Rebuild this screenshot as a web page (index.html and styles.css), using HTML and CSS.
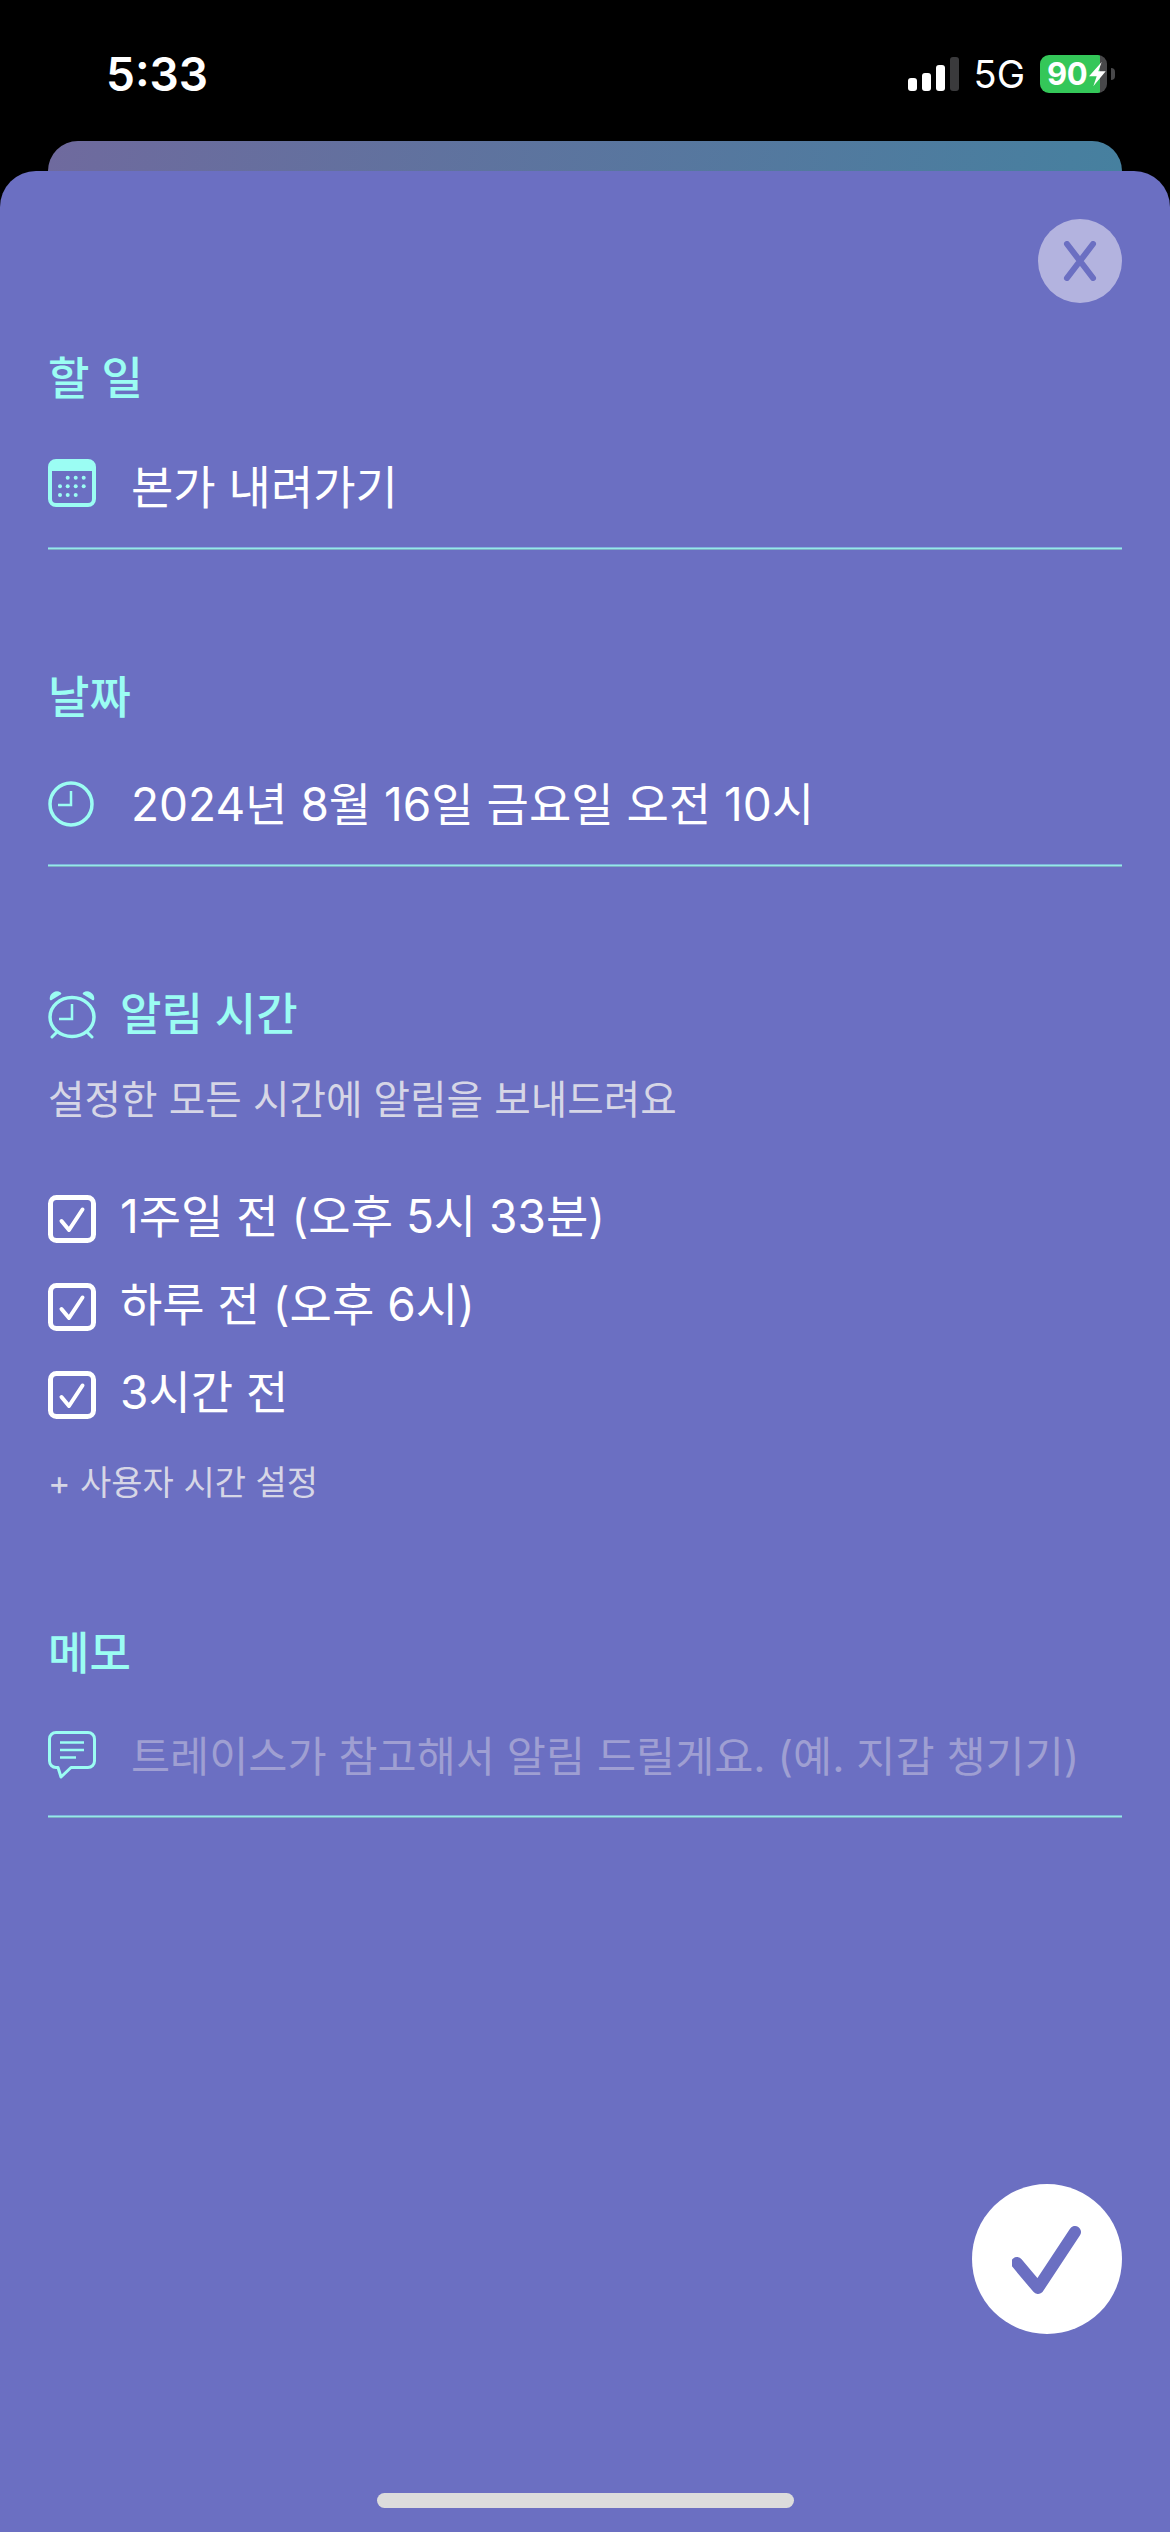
FILE: index.html
```html
<!DOCTYPE html>
<html lang="ko">
<head>
  <meta charset="UTF-8" />
  <meta name="viewport" content="width=device-width, initial-scale=1" />
  <title>할 일</title>
  <link rel="stylesheet" href="styles.css">
</head>
<body>

  <!-- Status bar -->
  <div class="statusbar">
    <span class="time">5:33</span>
    <div class="status-right">
      <div class="signal">
        <span class="bar b1"></span>
        <span class="bar b2"></span>
        <span class="bar b3"></span>
        <span class="bar b4"></span>
      </div>
      <span class="network">5G</span>
      <div class="battery">
        <div class="battery-body">
          <span class="battery-num">90</span>
          <svg class="bolt" width="17" height="25" viewBox="0 0 17 25"><path d="M12.700 0 L0 14.300 H7.700 L4.300 24.300 L16.700 9.300 H9.300 Z" fill="#fff"/></svg>
        </div>
        <span class="battery-nub"></span>
      </div>
    </div>
  </div>
  <div class="peek"></div>

  <!-- Sheet -->
  <div class="sheet">
    <div class="close-row">
      <button class="close">
        <svg width="36" height="40" viewBox="0 0 36 40"><path d="M5 3 L31 37 M31 3 L5 37" stroke="#6b6fc2" stroke-width="6" stroke-linecap="round" fill="none"/></svg>
      </button>
    </div>

    <section class="section s-todo">
      <h2 class="label">할 일</h2>
      <div class="field">
        <svg class="icon icon-cal" width="48" height="48" viewBox="0 0 48 48">
          <rect x="2" y="2" width="44" height="44" rx="6" fill="none" stroke="#9bfdf3" stroke-width="4"/>
          <path d="M2 12 V8 A6 6 0 0 1 8 2 H40 A6 6 0 0 1 46 8 V12 Z" fill="#9bfdf3"/>
          <g fill="#9bfdf3">
            <circle cx="19.700" cy="18.700" r="2"/><circle cx="27.700" cy="18.700" r="2"/><circle cx="35.700" cy="18.700" r="2"/>
            <circle cx="12" cy="27.300" r="2"/><circle cx="19.700" cy="27.300" r="2"/><circle cx="27.700" cy="27.300" r="2"/><circle cx="35.700" cy="27.300" r="2"/>
            <circle cx="12" cy="36" r="2"/><circle cx="19.700" cy="36" r="2"/><circle cx="27.700" cy="36" r="2"/>
          </g>
        </svg>
        <span class="value">본가 내려가기</span>
      </div>
      <div class="line"></div>
    </section>

    <section class="section s-date">
      <h2 class="label">날짜</h2>
      <div class="field">
        <svg class="icon" width="46" height="46" viewBox="0 0 46 46" fill="none" stroke="#9bfdf3">
          <circle cx="23" cy="23" r="21" stroke-width="3.500"/>
          <path d="M23 10 V24 H10" stroke-width="2.500"/>
        </svg>
        <span class="value">2024년 8월 16일 금요일 오전 10시</span>
      </div>
      <div class="line"></div>
    </section>

    <section class="section s-alarm">
      <div class="label-row">
        <svg width="48" height="48" viewBox="0 0 48 48" fill="none" stroke="#9bfdf3">
          <ellipse cx="24" cy="26" rx="22" ry="19.500" stroke-width="3.500"/>
          <path d="M24 13 V28 H11" stroke-width="2.500"/>
          <path d="M3 8 A6 6 0 0 1 12 2.500 Z M45 8 A6 6 0 0 0 36 2.500 Z" fill="#9bfdf3" stroke-width="2.500" stroke-linejoin="round"/>
          <path d="M9 41 L4 46 M39 41 L44 46" stroke-width="3" stroke-linecap="round"/>
        </svg>
        <h2 class="label">알림 시간</h2>
      </div>
      <p class="hint">설정한 모든 시간에 알림을 보내드려요</p>
      <ul class="alarms">
        <li class="alarm">
          <svg width="48" height="48" viewBox="0 0 48 48" fill="none" stroke="#fff"><rect x="2.500" y="2.500" width="43" height="43" rx="6" stroke-width="5"/><path d="M13.500 26 L21 35 L34.500 14.500" stroke-width="4" stroke-linecap="round" stroke-linejoin="round"/></svg>
          <span>1주일 전 (오후 5시 33분)</span>
        </li>
        <li class="alarm">
          <svg width="48" height="48" viewBox="0 0 48 48" fill="none" stroke="#fff"><rect x="2.500" y="2.500" width="43" height="43" rx="6" stroke-width="5"/><path d="M13.500 26 L21 35 L34.500 14.500" stroke-width="4" stroke-linecap="round" stroke-linejoin="round"/></svg>
          <span>하루 전 (오후 6시)</span>
        </li>
        <li class="alarm">
          <svg width="48" height="48" viewBox="0 0 48 48" fill="none" stroke="#fff"><rect x="2.500" y="2.500" width="43" height="43" rx="6" stroke-width="5"/><path d="M13.500 26 L21 35 L34.500 14.500" stroke-width="4" stroke-linecap="round" stroke-linejoin="round"/></svg>
          <span>3시간 전</span>
        </li>
      </ul>
      <p class="add-time">+ 사용자 시간 설정</p>
    </section>

    <section class="section s-memo">
      <h2 class="label">메모</h2>
      <div class="field">
        <svg class="icon icon-memo" width="48" height="48" viewBox="0 0 48 48" fill="none" stroke="#9bfdf3" stroke-width="3">
          <path d="M8 1.500 H40 A6.500 6.500 0 0 1 46.500 8 V30 A6.500 6.500 0 0 1 40 36.500 H23 L13 46 L10 36.500 H8 A6.500 6.500 0 0 1 1.500 30 V8 A6.500 6.500 0 0 1 8 1.500 Z" stroke-linejoin="round"/>
          <path d="M12 11.500 H36 M12 19 H36 M12 26.500 H28" stroke-width="2.500"/>
        </svg>
        <span class="value placeholder">트레이스가 참고해서 알림 드릴게요. (예. 지갑 챙기기)</span>
      </div>
      <div class="line"></div>
    </section>

    <button class="done">
      <svg width="70" height="70" viewBox="0 0 70 70"><path d="M5 39 L26 64 L63 8" stroke="#6b6fc2" stroke-width="12" stroke-linecap="round" stroke-linejoin="round" fill="none"/></svg>
    </button>
    <div class="home-bar"></div>
  </div>

</body>
</html>
```

FILE: styles.css
```css
* {
  box-sizing: border-box;
}

body {
  font-family: 'Inter', 'Noto Sans CJK KR', sans-serif;
  background-color: #000;
  color: #fff;
  margin: 0;
  padding: 0;
  width: 1170px;
  height: 2532px;
  overflow: hidden;
}

/* status bar */
.statusbar {
  height: 141px;
  display: flex;
  justify-content: space-between;
  align-items: flex-start;
  padding: 44px 55px 0 106px;
}

.time {
  font-size: 46px;
  font-weight: 600;
  line-height: 60px;
}

.status-right {
  display: flex;
  align-items: center;
  margin-top: 11px;
}

.signal {
  display: flex;
  align-items: flex-end;
  gap: 5px;
  height: 34px;
}

.bar {
  width: 9px;
  background: #fff;
  border-radius: 3px;
}

.b1 { height: 13px; }
.b2 { height: 18px; }
.b3 { height: 26px; }
.b4 { height: 34px; background: #3a3a3c; }

.network {
  font-size: 38px;
  line-height: 38px;
  margin: 0 15px;
}

.battery {
  display: flex;
  align-items: center;
}

.battery-body {
  width: 67px;
  height: 38px;
  border-radius: 9px;
  background: linear-gradient(to right, #34c759 60px, #48484a 60px);
  display: flex;
  align-items: center;
  padding-left: 7px;
  gap: 2px;
}

.battery-num {
  font-size: 31px;
  font-weight: 700;
  line-height: 38px;
  letter-spacing: -0.5px;
}

.bolt {
  flex: none;
}

.battery-nub {
  width: 4px;
  height: 12px;
  margin-left: 4px;
  background: #48484a;
  border-radius: 0 6px 6px 0;
}

.peek {
  height: 30px;
  margin: 0 48px;
  border-radius: 30px 30px 0 0;
  background: linear-gradient(100deg, #6f6a9e, #46809f);
}

/* sheet */
.sheet {
  position: relative;
  height: 2361px;
  padding: 48px 48px 0;
  background: #6b6fc2;
  border-radius: 36px 36px 0 0;
}

.close-row {
  display: flex;
  justify-content: flex-end;
  height: 84px;
}

.close {
  width: 84px;
  height: 84px;
  border: none;
  padding: 0;
  border-radius: 50%;
  background: #b3b3df;
  display: flex;
  align-items: center;
  justify-content: center;
}

.s-todo { margin-top: 42px; }
.s-date { margin-top: 114px; }
.s-alarm { margin-top: 114px; }
.s-memo { margin-top: 112px; }

.label {
  margin: 0;
  font-size: 45px;
  font-weight: 500;
  line-height: 68px;
  color: #9bfdf3;
}

.field {
  display: grid;
  grid-template-columns: 83px auto;
  align-items: center;
  height: 60px;
  margin-top: 42px;
}

.s-todo .field {
  margin-top: 44px;
}

.icon-cal {
  margin-bottom: 8px;
}

.icon-memo {
  margin-bottom: 5px;
}

.value {
  font-size: 46px;
  line-height: 60px;
  white-space: nowrap;
}

.placeholder {
  font-size: 42.5px;
  color: #9f9fd2;
}

/* the reference line has a brighter middle row */
.line {
  height: 3px;
  margin-top: 30px;
  background: linear-gradient(to bottom, #7fb4dc 33%, #96e8e8 33% 66%, #7cb0c4 66%);
}

.s-memo .field {
  margin-top: 39px;
}

.s-memo .line {
  margin-top: 28px;
}

.label-row {
  display: flex;
  align-items: center;
  gap: 24px;
}

.hint {
  margin: 23px 0 0;
  font-size: 39.7px;
  line-height: 56px;
  color: #d6d6e6;
}

.alarms {
  list-style: none;
  margin: 47px 0 0;
  padding: 0;
}

.alarm {
  display: flex;
  align-items: center;
  gap: 24px;
  height: 88px;
  font-size: 46px;
}

.alarm span {
  margin-bottom: 12px;
}

.add-time {
  margin: 19px 0 0;
  font-size: 34px;
  line-height: 50px;
  color: #d6d6e6;
}

.done {
  position: absolute;
  right: 48px;
  top: 2013px;
  width: 150px;
  height: 150px;
  border: none;
  padding: 0;
  border-radius: 50%;
  background: #fff;
  display: flex;
  align-items: center;
  justify-content: center;
}

.home-bar {
  position: absolute;
  left: 377px;
  top: 2322px;
  width: 417px;
  height: 15px;
  border-radius: 8px;
  background: #dcdcdc;
}
```
